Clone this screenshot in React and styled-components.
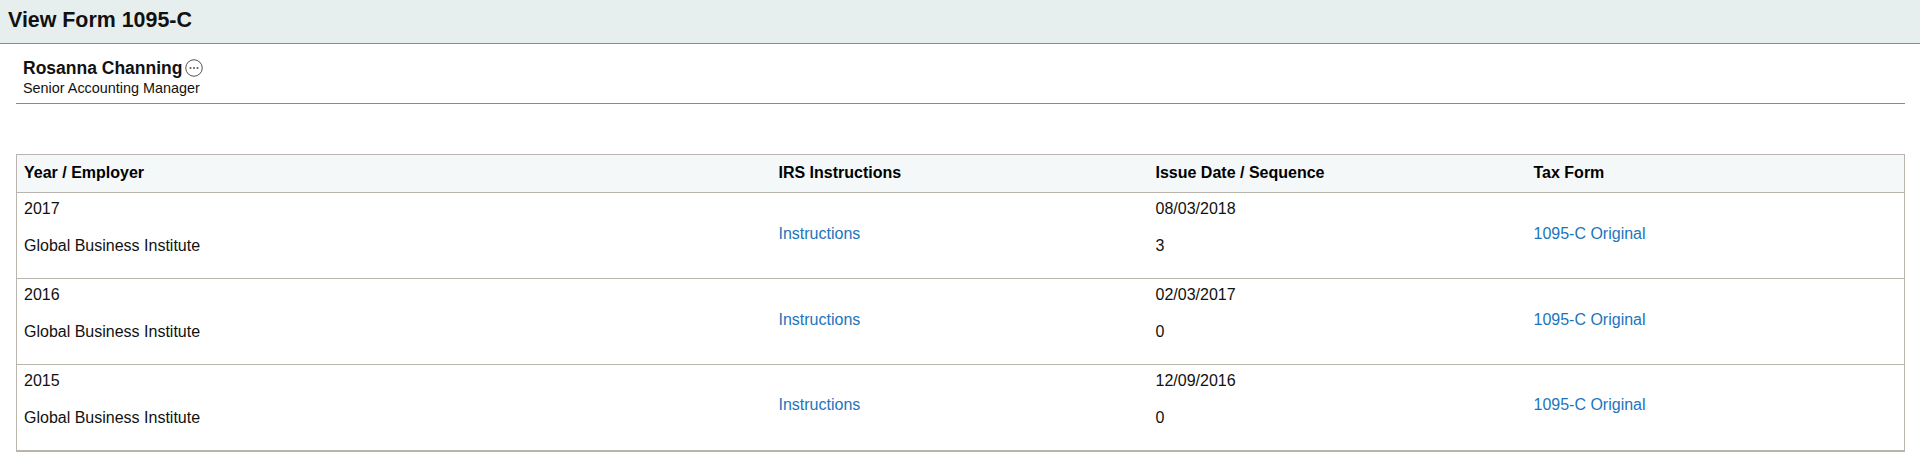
import styled, { createGlobalStyle } from 'styled-components';

const GlobalStyle = createGlobalStyle`
  body {
    margin: 0;
    background: #fff;
    color: #000;
    font-family: "Liberation Sans", Arial, sans-serif;
  }
`;

const forms = [
  { year: '2017', date: '08/03/2018', sequence: '3' },
  { year: '2016', date: '02/03/2017', sequence: '0' },
  { year: '2015', date: '12/09/2016', sequence: '0' },
];

function MoreIcon() {
  return (
    <svg width="18" height="18" viewBox="0 0 18 18" fill="none">
      <circle cx="9" cy="9" r="8.25" stroke="#5a5050" strokeWidth="1" />
      <circle cx="5.5" cy="9" r="1" fill="#5a5050" />
      <circle cx="9" cy="9" r="1" fill="#5a5050" />
      <circle cx="12.5" cy="9" r="1" fill="#5a5050" />
    </svg>
  );
}

export default function App() {
  return (
    <>
      <GlobalStyle />
      <Banner>
        <Title>View Form 1095-C</Title>
      </Banner>
      <Person>
        <NameRow>
          <Name>Rosanna Channing</Name>
          <MoreIcon />
        </NameRow>
        <JobTitle>Senior Accounting Manager</JobTitle>
      </Person>
      <Table>
        <thead>
          <tr>
            <HeadCell $width="755px">Year / Employer</HeadCell>
            <HeadCell $width="377px">IRS Instructions</HeadCell>
            <HeadCell $width="378px">Issue Date / Sequence</HeadCell>
            <HeadCell>Tax Form</HeadCell>
          </tr>
        </thead>
        <tbody>
          {forms.map((form) => (
            <tr key={form.year}>
              <Cell>
                <Line>{form.year}</Line>
                <Line>Global Business Institute</Line>
              </Cell>
              <LinkCell>
                <FormLink href="#">Instructions</FormLink>
              </LinkCell>
              <Cell>
                <Line>{form.date}</Line>
                <Line>{form.sequence}</Line>
              </Cell>
              <LinkCell>
                <FormLink href="#">1095-C Original</FormLink>
              </LinkCell>
            </tr>
          ))}
        </tbody>
      </Table>
    </>
  );
}

const Banner = styled.header`
  height: 44px;
  border-bottom: 1px solid #8a8a8a;
  padding: 0 0 2px 8px;
  box-sizing: border-box;
  display: flex;
  align-items: center;
  background: #e7efee;
`;

const Title = styled.h1`
  margin: 0;
  font-size: 21.4px;
  font-weight: bold;
  color: #111;
`;

const Person = styled.section`
  height: 60px;
  margin: 0 15px 0 16px;
  padding: 14px 0 0 7px;
  box-sizing: border-box;
  border-bottom: 1px solid #8a8a8a;
`;

const NameRow = styled.div`
  display: flex;
  align-items: center;
  gap: 3px;
  height: 20px;
`;

const Name = styled.span`
  font-size: 17.5px;
  font-weight: bold;
  color: #111;
`;

const JobTitle = styled.div`
  margin-top: 2px;
  font-size: 14.4px;
  color: #111;
`;

const Table = styled.table`
  width: 1889px;
  margin: 50px 15px 0 16px;
  border-collapse: collapse;
  border: 1px solid #b9b4ae;
  border-bottom-width: 2px;
  table-layout: fixed;
  font-size: 16px;
`;

const HeadCell = styled.th`
  width: ${(props) => props.$width || 'auto'};
  height: 38px;
  padding: 0 7px 2px;
  box-sizing: border-box;
  border-bottom: 1px solid #b9b4ae;
  background: #f4f8f9;
  text-align: left;
  font-weight: bold;
  color: #000;
`;

const Cell = styled.td`
  height: 86px;
  padding: 0 7px;
  box-sizing: border-box;
  border-bottom: 1px solid #b9b4ae;
  vertical-align: top;
  color: #111;
`;

const LinkCell = styled(Cell)`
  padding-bottom: 4px;
  vertical-align: middle;
`;

const Line = styled.div`
  line-height: 32px;
  margin-bottom: 5px;
`;

const FormLink = styled.a`
  color: #1c75bc;
  text-decoration: none;
`;
